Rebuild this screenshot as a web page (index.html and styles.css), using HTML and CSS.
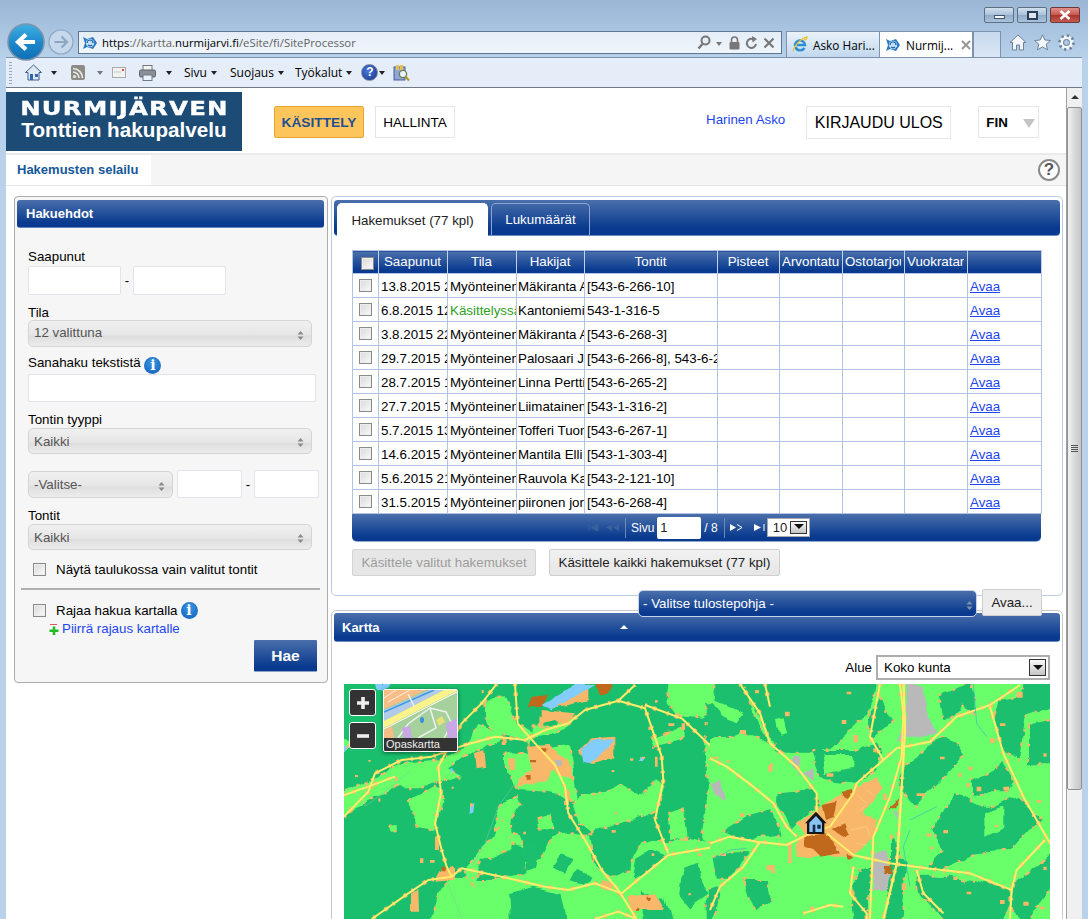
FILE: index.html
```html
<!DOCTYPE html>
<html lang="fi">
<head>
<meta charset="utf-8">
<title>Nurmijärven Tonttien hakupalvelu</title>
<link rel="stylesheet" href="styles.css">
</head>
<body>
<svg class="defs" width="0" height="0" aria-hidden="true">
  <defs>
    <linearGradient id="backG" x1="0" y1="0" x2="0" y2="1"><stop offset="0" stop-color="#3fb0e4"/><stop offset=".55" stop-color="#1b86c9"/><stop offset="1" stop-color="#0f6fb5"/></linearGradient>
    <symbol id="site" viewBox="0 0 16 16">
      <path d="M1 2 L5 4 L11 2 L15 8 L11 14 L5 12 L1 14 L3 8 Z" fill="#2a78c2"/>
      <circle cx="8" cy="8" r="4.2" fill="#bfe0f7"/>
      <path d="M5 8 a3 3 0 0 1 6 0 M6 10 a3 3 0 0 0 4 0" fill="none" stroke="#1e5fa8" stroke-width="1.2"/>
    </symbol>
    <filter id="rough" x="-5%" y="-5%" width="110%" height="110%">
      <feTurbulence type="fractalNoise" baseFrequency=".012" numOctaves="3" seed="4"/>
      <feDisplacementMap in="SourceGraphic" scale="34" xChannelSelector="R" yChannelSelector="G"/>
    </filter>
    <filter id="roughSmall" x="-5%" y="-5%" width="110%" height="110%">
      <feTurbulence type="fractalNoise" baseFrequency=".03" numOctaves="2" seed="9"/>
      <feDisplacementMap in="SourceGraphic" scale="12" xChannelSelector="R" yChannelSelector="G"/>
    </filter>
  </defs>
</svg>
<div class="win">
  <div class="titlebar">
    <span class="winbtn"><i class="min"></i></span>
    <span class="winbtn"><i class="rest"></i></span>
    <span class="winbtn close">
      <svg width="14" height="10" viewBox="0 0 14 10"><path d="M2.5 1 L11.5 9 M11.5 1 L2.5 9" stroke="#fff" stroke-width="2.6"/></svg>
    </span>
  </div>
  <div class="navrow">
    <span class="backbtn">
      <svg width="38" height="38" viewBox="0 0 38 38"><circle cx="19" cy="19" r="18" fill="url(#backG)" stroke="#7d93ab" stroke-width="1.6"/><path d="M28 19 H12 M19 11.5 L11 19 L19 26.5" fill="none" stroke="#fff" stroke-width="4.2"/></svg>
    </span>
    <span class="fwdbtn">
      <svg width="26" height="26" viewBox="0 0 26 26"><circle cx="13" cy="13" r="12" fill="#c5d8ec" stroke="#8fa6bf" stroke-width="1.2"/><path d="M6.5 13 H18 M13.5 7.5 L19 13 L13.5 18.5" fill="none" stroke="#8ea7c0" stroke-width="2.2"/></svg>
    </span>
    <div class="address">
      <svg class="siteicon" width="16" height="16"><use href="#site"/></svg>
      <span class="url">https<span class="dim">://kartta.</span>nurmijarvi.fi<span class="dim">/eSite/fi/SiteProcessor</span></span>
      <span class="addr-tools">
        <svg width="14" height="15" viewBox="0 0 14 15"><circle cx="8.5" cy="5.5" r="4" fill="none" stroke="#777" stroke-width="2"/><path d="M5.5 9 L1.5 13.5" stroke="#777" stroke-width="2.4"/></svg>
        <i class="caret grey"></i>
        <svg class="lock" width="11" height="14" viewBox="0 0 11 14"><path d="M2.5 6 V4 a3 3 0 0 1 6 0 V6" fill="none" stroke="#777" stroke-width="1.6"/><rect x="0.5" y="6" width="10" height="7.5" rx="1" fill="#777"/></svg>
        <svg width="13" height="14" viewBox="0 0 13 14"><path d="M11 8 A4.6 4.6 0 1 1 8.6 3.2" fill="none" stroke="#777" stroke-width="2"/><path d="M7 0 L12 3 L7.5 6.5 Z" fill="#777"/></svg>
        <svg width="12" height="12" viewBox="0 0 12 12"><path d="M1.5 1.5 L10.5 10.5 M10.5 1.5 L1.5 10.5" stroke="#777" stroke-width="2.2"/></svg>
      </span>
    </div>
    <div class="browser-tabs">
      <div class="btab inactive">
        <svg width="16" height="17" viewBox="0 0 16 17"><path d="M3 10 a5 5 0 1 1 10 -1 H5 M3.5 11 a5 5 0 0 0 9 1" fill="none" stroke="#2b8fd6" stroke-width="2.4"/><path d="M1 15 C3 9 9 2 15 1 C13 6 14 4 12 3" fill="none" stroke="#f0c020" stroke-width="1.2"/></svg>
        <span>Asko Hari...</span>
      </div>
      <div class="btab active">
        <svg width="16" height="16"><use href="#site"/></svg>
        <span>Nurmij...</span>
        <svg class="tabx" width="10" height="10" viewBox="0 0 10 10"><path d="M1 1 L9 9 M9 1 L1 9" stroke="#9a9a9a" stroke-width="2.2"/></svg>
      </div>
      <div class="btab newtab"></div>
    </div>
    <div class="ie-tools">
      <svg width="18" height="17" viewBox="0 0 18 17"><path d="M9 1 L17 8.5 H14.5 V16 H10.500 V11 H7.500 V16 H3.500 V8.500 H1 Z" fill="#f3f7fb" stroke="#6d8299"/></svg>
      <svg width="17" height="17" viewBox="0 0 17 17"><path d="M8.5 .8 L10.8 6 L16.4 6.5 L12.2 10.2 L13.5 15.8 L8.5 12.9 L3.5 15.8 L4.8 10.2 L.6 6.5 L6.2 6 Z" fill="#f3f7fb" stroke="#6d8299"/></svg>
      <svg width="17" height="17" viewBox="0 0 17 17"><circle cx="8.5" cy="8.5" r="5.2" fill="none" stroke="#f3f7fb" stroke-width="3.4"/><circle cx="8.5" cy="8.5" r="7" fill="none" stroke="#6d8299" stroke-width="2.6" stroke-dasharray="2.4 3.1"/><circle cx="8.5" cy="8.5" r="3" fill="none" stroke="#6d8299"/></svg>
    </div>
  </div>
  <div class="toolbar">
    <i class="grip"></i>
    <svg class="t-home" width="17" height="17" viewBox="0 0 17 17"><path d="M8.5 1 L16.5 8.5 H14 V16 H3 V8.5 H.5 Z" fill="#dfe9f5" stroke="#3c5f86"/><rect x="5" y="10" width="3" height="6" fill="#2f66b2"/><rect x="10" y="10" width="3" height="3" fill="#2f66b2"/></svg>
    <i class="caret t-c1"></i>
    <svg class="t-rss" width="14" height="15" viewBox="0 0 14 15"><rect width="14" height="15" rx="2" fill="#8c8c86"/><circle cx="3.5" cy="11.5" r="1.6" fill="#e8e8e4"/><path d="M2 7 a6 6 0 0 1 6 6 M2 3.5 a9.500 9.500 0 0 1 9.500 9.500" fill="none" stroke="#e8e8e4" stroke-width="1.7"/></svg>
    <i class="caret grey t-c2"></i>
    <svg class="t-mail" width="14" height="11" viewBox="0 0 14 11"><rect x=".5" y=".5" width="13" height="10" fill="#f2f2f2" stroke="#a9a9a9"/><path d="M2 5 H9" stroke="#c9c9c9"/><rect x="10" y="2" width="2" height="2" fill="#d44"/></svg>
    <svg class="t-print" width="17" height="16" viewBox="0 0 17 16"><rect x="4" y="0.500" width="9" height="5" fill="#f4f4f4" stroke="#777"/><rect x=".5" y="5" width="16" height="7" rx="1.500" fill="#8b9096" stroke="#5f656b"/><rect x="4" y="10" width="9" height="5.500" fill="#eaf2fb" stroke="#6b7a8a"/></svg>
    <i class="caret t-c3"></i>
    <span class="menu t-sivu">Sivu</span><i class="caret t-mc"></i>
    <span class="menu t-suo">Suojaus</span><i class="caret t-mc"></i>
    <span class="menu t-tyo">Työkalut</span><i class="caret t-mc"></i>
    <span class="t-help">?</span><i class="caret t-c4"></i>
    <svg class="t-res" width="17" height="18" viewBox="0 0 17 18"><rect x="1" y="3" width="11" height="13" fill="#8ea6d8" stroke="#4b5f96"/><rect x="3" y="1" width="3" height="5" fill="#e3c24c"/><rect x="7" y="1" width="3" height="5" fill="#e3c24c"/><circle cx="10" cy="10" r="3.600" fill="#eaf6ff" stroke="#6d7c4d" stroke-width="1.300"/><path d="M12.500 12.500 L16 16.500" stroke="#b7942a" stroke-width="2"/></svg>
  </div>

  <div class="viewport">
    <div class="page">
      <header class="header">
        <div class="logo">
          <div class="logo-1"><span>NURMIJÄRVEN</span></div>
          <div class="logo-2">Tonttien hakupalvelu</div>
        </div>
        <a class="navbtn current">KÄSITTELY</a>
        <a class="navbtn">HALLINTA</a>
        <a class="username">Harinen Asko</a>
        <a class="logout">KIRJAUDU ULOS</a>
        <span class="lang">FIN<i class="lang-caret"></i></span>
      </header>
      <nav class="subnav">
        <a class="subtab">Hakemusten selailu</a>
        <span class="help">?</span>
      </nav>
      <div class="content">
        <aside class="filters">
          <h2 class="bar">Hakuehdot</h2>
          <div class="filter-body">
            <label class="lbl first">Saapunut</label>
            <div class="range">
              <span class="inp w93"></span><span class="dash">-</span><span class="inp w93"></span>
            </div>
            <label class="lbl l-tila">Tila</label>
            <div class="sel h27">12 valittuna<svg class="updown" width="7" height="9" viewBox="0 0 7 9"><path d="M3.500 0 L6.500 3.500 H.5 Z M.5 5.500 H6.500 L3.500 9 Z" fill="#8a8a8a"/></svg></div>
            <label class="lbl l-sana">Sanahaku tekstistä <span class="info">i</span></label>
            <span class="inp full"></span>
            <label class="lbl l-tyyppi">Tontin tyyppi</label>
            <div class="sel h26">Kaikki<svg class="updown" width="7" height="9" viewBox="0 0 7 9"><path d="M3.500 0 L6.500 3.500 H.5 Z M.5 5.500 H6.500 L3.500 9 Z" fill="#8a8a8a"/></svg></div>
            <div class="range2">
              <div class="sel small">-Valitse-<svg class="updown" width="7" height="9" viewBox="0 0 7 9"><path d="M3.500 0 L6.500 3.500 H.5 Z M.5 5.500 H6.500 L3.500 9 Z" fill="#8a8a8a"/></svg></div>
              <span class="inp w65"></span><span class="dash">-</span><span class="inp w65"></span>
            </div>
            <label class="lbl l-tontit">Tontit</label>
            <div class="sel h26">Kaikki<svg class="updown" width="7" height="9" viewBox="0 0 7 9"><path d="M3.500 0 L6.500 3.500 H.5 Z M.5 5.500 H6.500 L3.500 9 Z" fill="#8a8a8a"/></svg></div>
            <label class="check c-1"><input type="checkbox" class="cb"> Näytä taulukossa vain valitut tontit</label>
            <hr class="rule">
            <label class="check c-2"><input type="checkbox" class="cb"> Rajaa hakua kartalla <span class="info">i</span></label>
            <div class="drawlink">
              <svg width="10" height="11" viewBox="0 0 10 11"><path d="M1 .5 H8" stroke="#e05555"/><path d="M5 2.500 V11 M.5 6.800 H9.500" stroke="#22bb22" stroke-width="2.600"/></svg>
              <a>Piirrä rajaus kartalle</a>
            </div>
            <div class="search-row"><button class="hae">Hae</button></div>
          </div>
        </aside>

        <main class="results">
          <section class="panel grid-panel">
            <div class="tabbar">
              <a class="tab on">Hakemukset (77 kpl)</a>
              <a class="tab">Lukumäärät</a>
            </div>
            <div class="table-wrap">
              <table class="grid">
                <colgroup>
                  <col class="c0"><col class="c1"><col class="c2"><col class="c3"><col class="c4"><col class="c5"><col class="c6"><col class="c7"><col class="c8"><col class="c9">
                </colgroup>
                <thead>
                  <tr><th><input type="checkbox" class="cb head"></th><th><span class="clip">Saapunut</span></th><th><span class="clip">Tila</span></th><th><span class="clip">Hakijat</span></th><th><span class="clip">Tontit</span></th><th><span class="clip">Pisteet</span></th><th><span class="clip">Arvontatulos</span></th><th><span class="clip">Ostotarjous</span></th><th><span class="clip">Vuokratarjous</span></th><th></th></tr>
                </thead>
                <tbody>
                  <tr><td><input type="checkbox" class="cb"></td><td>13.8.2015 21:15</td><td>Myönteinen</td><td>Mäkiranta Antti</td><td>[543-6-266-10]</td><td></td><td></td><td></td><td></td><td><a>Avaa</a></td></tr>
                  <tr><td><input type="checkbox" class="cb"></td><td>6.8.2015 12:40</td><td class="green">Käsittelyssä</td><td>Kantoniemi Esa</td><td>543-1-316-5</td><td></td><td></td><td></td><td></td><td><a>Avaa</a></td></tr>
                  <tr><td><input type="checkbox" class="cb"></td><td>3.8.2015 22:10</td><td>Myönteinen</td><td>Mäkiranta Antti</td><td>[543-6-268-3]</td><td></td><td></td><td></td><td></td><td><a>Avaa</a></td></tr>
                  <tr><td><input type="checkbox" class="cb"></td><td>29.7.2015 20:05</td><td>Myönteinen</td><td>Palosaari Jari</td><td>[543-6-266-8], 543-6-266-9</td><td></td><td></td><td></td><td></td><td><a>Avaa</a></td></tr>
                  <tr><td><input type="checkbox" class="cb"></td><td>28.7.2015 18:30</td><td>Myönteinen</td><td>Linna Pertti</td><td>[543-6-265-2]</td><td></td><td></td><td></td><td></td><td><a>Avaa</a></td></tr>
                  <tr><td><input type="checkbox" class="cb"></td><td>27.7.2015 19:20</td><td>Myönteinen</td><td>Liimatainen Ari</td><td>[543-1-316-2]</td><td></td><td></td><td></td><td></td><td><a>Avaa</a></td></tr>
                  <tr><td><input type="checkbox" class="cb"></td><td>5.7.2015 13:45</td><td>Myönteinen</td><td>Tofferi Tuomas</td><td>[543-6-267-1]</td><td></td><td></td><td></td><td></td><td><a>Avaa</a></td></tr>
                  <tr><td><input type="checkbox" class="cb"></td><td>14.6.2015 21:00</td><td>Myönteinen</td><td>Mantila Elli</td><td>[543-1-303-4]</td><td></td><td></td><td></td><td></td><td><a>Avaa</a></td></tr>
                  <tr><td><input type="checkbox" class="cb"></td><td>5.6.2015 21:30</td><td>Myönteinen</td><td>Rauvola Kari</td><td>[543-2-121-10]</td><td></td><td></td><td></td><td></td><td><a>Avaa</a></td></tr>
                  <tr><td><input type="checkbox" class="cb"></td><td>31.5.2015 20:10</td><td>Myönteinen</td><td>piironen jorma</td><td>[543-6-268-4]</td><td></td><td></td><td></td><td></td><td><a>Avaa</a></td></tr>
                </tbody>
              </table>
              <div class="pager">
                <svg class="pg-first" width="11" height="7" viewBox="0 0 11 7"><path d="M1 0 V7 M10 0 L3 3.500 L10 7 Z" stroke="#38619e" fill="#38619e"/></svg>
                <svg class="pg-prev" width="13" height="7" viewBox="0 0 13 7"><path d="M6 0 L0 3.500 L6 7 Z M13 0 L7 3.500 L13 7 Z" fill="#38619e"/></svg>
                <i class="pg-sep"></i>
                <span class="pg-text">Sivu</span>
                <span class="pg-input">1</span>
                <span class="pg-text">/ 8</span>
                <i class="pg-sep"></i>
                <svg class="pg-next" width="13" height="7" viewBox="0 0 13 7"><path d="M0 0 L6 3.500 L0 7 Z" fill="#fff"/><path d="M7 .5 L12 3.500 L7 6.500" fill="none" stroke="#fff"/></svg>
                <svg class="pg-last" width="11" height="7" viewBox="0 0 11 7"><path d="M0 0 L7 3.500 L0 7 Z" fill="#fff"/><path d="M10 0 V7" stroke="#fff"/></svg>
                <span class="pg-size">10<i class="dropbtn small-drop"></i></span>
              </div>
            </div>
            <div class="actions">
              <button class="btn disabled">Käsittele valitut hakemukset</button>
              <button class="btn all">Käsittele kaikki hakemukset (77 kpl)</button>
            </div>
          </section>

          <div class="print-tools">
            <div class="print-sel">- Valitse tulostepohja -<svg class="updown" width="7" height="9" viewBox="0 0 7 9"><path d="M3.500 0 L6.500 3.500 H.5 Z M.5 5.500 H6.500 L3.500 9 Z" fill="#7f8fa8"/></svg></div>
            <button class="btn open">Avaa...</button>
          </div>

          <section class="panel map-panel">
            <div class="mapbar"><span class="mapbar-title">Kartta</span><i class="collapse"></i></div>
            <div class="area-row">
              <span>Alue</span>
              <span class="area-sel">Koko kunta<i class="dropbtn"></i></span>
            </div>
            <div class="map">
              <svg class="mapsvg" width="706" height="235" viewBox="0 0 706 235">
                <defs>
                  <g id="roads9">
                    <path d="M27,410 L100,335 L120,280 L200,240 L290,230 L390,195 L480,170 L570,180 L630,150 L700,130 L750,90 L850,62 L900,15"/>
                    <path d="M540,12 L548,130 L600,190 L660,255 L690,320 L700,400 L750,480 L800,570 L850,630 L905,717"/>
                    <path d="M485,12 L440,70 L380,130 L310,260 L318,340 L300,430 L320,510 L335,560 L350,590 L280,600 L220,640 L110,717"/>
                    <path d="M350,590 L380,565 L520,595 L630,620 L700,630 L780,610 L860,640 L920,590 L1000,525 L1140,500"/>
                    <path d="M850,62 L930,85 L980,230 L985,300 L960,420 L1000,520"/>
                    <path d="M930,75 L1040,115 L1140,210"/>
                    <path d="M780,717 L850,695 L905,717"/>
                    <path d="M27,345 L100,320 L180,290"/>
                  </g>
                  <g id="roads10">
                    <path d="M90,12 L150,100 L180,190 L260,260 L320,340 L320,400"/>
                    <path d="M0,235 L50,260 L130,320 L190,370 L230,440 L260,470"/>
                    <path d="M0,490 L60,470 L140,485 L230,495 L300,460 L360,440 L430,340 L440,310 L520,240 L560,205 L660,185 L740,110 L840,75 L930,15"/>
                    <path d="M350,460 L430,525 L540,550 L650,565 L780,580 L905,630"/>
                    <path d="M510,12 L480,170 L520,240"/>
                    <path d="M840,80 L880,220 L940,350 L1020,490"/>
                    <path d="M1005,480 L920,570 L905,630 L900,717"/>
                    <path d="M150,485 L100,560 L30,620 L0,690"/>
                    <path d="M620,570 L640,640 L700,700"/>
                    <path d="M430,560 L420,640 L470,700 L470,717"/>
                    <path d="M280,700 L360,675 L400,680"/>
                    <path d="M165,12 L180,80"/>
                    <path d="M570,12 L580,100 L575,230 L540,350 L490,470 L480,717"/>
                    <path d="M580,12 L585,150 L570,400 L560,550 L520,717"/>
                  </g>
                </defs>
                <rect width="706" height="235" fill="#1abf6d"/>
                <g transform="translate(-9 -4) scale(.33333)">
                  <g filter="url(#rough)">
                    <g fill="#69ff6b" stroke="#f9b769" stroke-width="6" stroke-dasharray="8 34 12 26">
                      <path d="M280,730 L300,640 L350,600 L480,600 L525,590 L575,580 L570,540 L620,530 L650,470 L720,460 L762,470 L775,540 L830,590 L880,570 L900,520 L920,482 L1000,490 L1060,470 L1160,500 L1160,730 Z"/>
                      <path d="M27,335 L60,320 L110,300 L165,268 L240,248 L320,240 L380,205 L430,135 L505,155 L490,185 L420,210 L345,262 L390,285 L330,305 L250,325 L180,325 L115,345 L80,380 L10,410 L10,340 Z"/>
                      <path d="M228,360 L300,320 L322,330 L300,450 L240,440 Z"/>
                      <path d="M445,62 L510,58 L530,82 L545,130 L600,165 L585,190 L560,175 L490,160 L450,120 Z"/>
                      <path d="M590,140 L660,135 L720,105 L700,140 L640,165 L590,175 Z"/>
                      <path d="M1000,0 L1160,0 L1160,70 L1090,110 L1020,100 L990,60 Z"/>
                      <path d="M950,175 L1040,150 L1050,175 L990,190 L960,200 Z"/>
                      <path d="M510,230 L700,200 L725,355 L640,335 L550,330 L510,280 Z"/>
                      <path d="M500,370 L550,350 L562,380 L512,460 L552,480 L562,505 L500,492 L480,470 L472,440 Z"/>
                      <path d="M605,410 L640,400 L652,445 L610,452 Z"/>
                      <path d="M738,345 L780,340 L860,315 L910,345 L965,295 L985,320 L960,380 L935,405 L840,430 L770,460 L735,430 L715,360 Z"/>
                      <path d="M162,440 L185,438 L185,460 L165,462 Z"/>
                      <path d="M1110,190 L1160,190 L1160,500 L1100,480 L1120,350 Z"/>
                      <path d="M1000,400 L1040,385 L1060,470 L1010,480 Z"/>
                      <path d="M500,420 L530,430 L520,510 L440,540 L410,620 L395,580 Z"/>
                      <path d="M5,190 L40,195 L30,220 L5,225 Z"/>
                    </g>
                    <g fill="#1abf6d">
                      <path d="M520,640 L600,620 L680,640 L695,730 L525,730 Z"/>
                      <path d="M680,520 L720,535 L690,575 L650,560 Z"/>
                      <path d="M900,540 L950,510 L990,530 L940,580 L890,600 Z"/>
                      <path d="M1040,570 L1090,555 L1120,640 L1060,680 L1030,640 Z"/>
                      <path d="M730,570 L770,590 L740,610 L700,600 Z"/>
                      <path d="M920,640 L990,650 L1010,730 L920,730 Z"/>
                      <path d="M580,500 L610,490 L600,560 L570,570 Z"/>
                    </g>
                  </g>
                  <g filter="url(#roughSmall)">
                    <g fill="#f9b769">
                      <path d="M575,200 L640,195 L700,240 L715,295 L690,290 L650,270 L640,300 L600,310 L545,320 L555,290 L590,270 Z"/>
                      <path d="M620,90 L720,100 L690,140 L660,120 L620,130 Z"/>
                      <path d="M725,215 L770,175 L838,170 L838,235 L770,252 Z"/>
                      <path d="M228,640 L250,630 L252,695 L228,695 Z"/>
                      <path d="M320,570 L360,560 L360,600 L300,605 Z"/>
                      <path d="M420,220 L445,210 L450,260 L425,265 Z"/>
                      <path d="M880,650 L960,640 L990,690 L890,690 Z"/>
                      <path d="M800,600 L840,610 L830,630 L790,620 Z"/>
                      <path d="M720,35 L760,20 L760,60 L700,75 L640,85 L700,60 Z"/>
                      <path d="M520,235 h20 v35 h-20 z M690,330 h12 v45 h-12 z M610,110 h12 v35 h-12 z M500,170 h15 v25 h-15 z"/>
                    </g>
                    <g fill="#c0671a">
                      <path d="M590,50 L640,45 L620,80 L578,82 Z"/>
                      <path d="M782,12 L832,12 L822,44 L795,46 Z"/>
                      <path d="M620,205 h14 v12 h-14 z M585,240 h18 v10 h-18 z M575,285 h12 v14 h-12 z M320,560 h12 v14 h-12 z M935,650 h12 v10 h-12 z M900,685 h10 v8 h-10 z"/>
                    </g>
                    <g fill="#82cdfb">
                      <path d="M620,75 L680,40 L720,12 L780,12 L720,50 L650,88 Z"/>
                      <path d="M738,208 L770,180 L836,178 L820,205 L765,250 L745,245 Z"/>
                      <path d="M120,12 L165,12 L150,30 L125,30 Z"/>
                      <path d="M405,375 L418,365 L415,400 L404,405 Z"/>
                      <path d="M27,195 L37,200 L30,215 L27,215 Z"/>
                      <path d="M350,265 h6 v12 h-6 z M915,235 h12 v8 h-12 z"/>
                    </g>
                  </g>
                  <path fill="#f9b769" d="M100,240 h7 v5 h-7 z M180,290 h8 v12 h-8 z M60,285 h9 v6 h-9 z M105,320 h10 v6 h-10 z M130,355 h6 v10 h-6 z M885,235 h10 v7 h-10 z M300,470 h12 v40 h-12 z M255,535 h10 v14 h-10 z M285,540 h14 v8 h-14 z M440,30 h6 v10 h-6 z M940,140 h12 v10 h-12 z M960,230 h8 v30 h-8 z M1000,130 h18 v8 h-18 z M1040,130 h10 v20 h-10 z M405,370 h8 v10 h-8 z M350,320 h6 v6 h-6 z M830,270 h8 v6 h-8 z M770,340 h12 v6 h-12 z M840,395 h6 v8 h-6 z M565,455 h8 v8 h-8 z M505,510 h7 v7 h-7 z M430,580 h10 v6 h-10 z M410,590 h6 v8 h-6 z M1090,520 h10 v8 h-10 z M1060,640 h8 v6 h-8 z M950,520 h8 v8 h-8 z M760,460 h12 v6 h-12 z M830,450 h12 v8 h-12 z M920,230 h10 v6 h-10 z M960,60 h8 v8 h-8 z M1020,100 h12 v8 h-12 z"/>
                  <path d="M1125,320 L1140,300 L1140,345 Z" fill="#b9b9b9"/>
                  <path d="M660,240 L680,240 L680,258 L660,258 Z" fill="#b9b9b9"/>
                  <use href="#roads9" fill="none" stroke="#f9b769" stroke-width="13" stroke-dasharray="6 20 10 34"/>
                  <use href="#roads9" fill="none" stroke="#ffec6a" stroke-width="6" stroke-linejoin="round"/>
                  <g fill="none" stroke="#7bc9a8" stroke-width="1.500">
                    <path d="M540,310 L490,380 L450,490 L410,560"/>
                    <path d="M340,610 L380,717"/>
                    <path d="M90,380 L130,350 L230,270"/>
                  </g>
                </g>

                <g transform="translate(366 -4) scale(.33333)">
                  <rect x="0" y="12" width="1020" height="705" fill="#69ff6b"/>
                  <g filter="url(#rough)">
                    <g fill="#1abf6d" stroke="#f9b769" stroke-width="6" stroke-dasharray="7 38 11 30">
                      <path d="M160,0 L500,0 L490,60 L470,100 L430,140 L380,180 L360,200 L310,215 L270,215 L210,215 L190,200 L170,150 L140,90 L100,30 L85,0 Z"/>
                      <path d="M25,0 L85,0 L140,110 L175,190 L130,160 L90,160 L50,180 L-10,180 L-10,70 L15,70 Z"/>
                      <path d="M40,450 L120,400 L190,385 L215,470 L120,480 Z"/>
                      <path d="M210,340 L310,330 L320,380 L260,430 L240,450 L205,370 Z"/>
                      <path d="M590,250 L630,220 L700,170 L740,190 L760,220 L720,270 L660,330 L610,380 L590,350 L570,320 Z"/>
                      <path d="M700,510 L650,560 L690,570 L800,520 L900,510 L960,440 L1000,420 L920,350 L860,380 L790,380 L760,350 L730,340 L690,420 L660,450 Z"/>
                      <path d="M780,300 L820,280 L880,250 L920,310 L900,340 L820,340 L780,350 Z"/>
                      <path d="M680,40 L790,0 L800,50 L800,100 L760,80 L700,120 L690,90 Z"/>
                      <path d="M850,100 L880,220 L930,240 L950,110 L1040,80 L1040,0 L945,0 L920,50 L860,60 Z"/>
                      <path d="M100,600 L180,600 L190,660 L130,700 L110,640 Z"/>
                      <path d="M10,530 L60,520 L120,520 L60,590 L20,590 Z"/>
                      <path d="M440,570 L480,560 L480,730 L440,730 L420,620 Z"/>
                      <path d="M540,480 L590,540 L570,730 L520,730 L540,580 Z"/>
                      <path d="M620,590 L720,590 L790,600 L900,640 L880,730 L700,730 L660,680 L620,620 Z"/>
                      <path d="M300,210 L430,210 L500,190 L520,230 L490,270 L440,310 L330,290 L310,240 Z"/>
                      <path d="M960,580 L1040,500 L1040,600 L950,730 L900,680 L910,610 Z"/>
                      <path d="M-10,620 L30,610 L20,700 L-10,730 Z"/>
                      <path d="M550,120 L480,180 L480,100 L510,60 Z"/>
                      <path d="M960,140 L1040,120 L1040,250 L960,250 Z"/>
                    </g>
                    <g fill="#69ff6b">
                      <path d="M10,60 L60,80 L100,100 L80,130 L30,110 Z"/>
                      <path d="M195,120 L215,115 L225,165 L205,170 Z"/>
                      <path d="M340,225 L420,225 L430,260 L350,280 Z"/>
                      <path d="M820,400 L880,380 L880,440 L820,470 Z"/>
                    </g>
                  </g>
                  <g filter="url(#roughSmall)">
                    <g fill="#b9b9b9">
                      <path d="M590,0 L640,20 L650,100 L680,160 L640,170 L590,170 L555,190 L590,130 Z"/>
                      <path d="M490,520 L530,510 L540,580 L530,630 L490,630 Z"/>
                      <path d="M0,310 L30,300 L45,360 L15,345 Z"/>
                      <path d="M250,230 L275,230 L265,290 L310,265 L312,300 L280,285 L250,260 Z"/>
                      <path d="M550,390 L565,400 L560,415 Z"/>
                    </g>
                    <path fill="#f9b769" d="M345,370 L420,335 L450,320 L500,290 L515,325 L490,365 L455,400 L500,420 L490,470 L460,500 L420,530 L370,530 L340,520 L300,535 L260,530 L260,490 L280,460 L260,430 L310,400 Z"/>
                    <g fill="#c0671a">
                      <path d="M280,470 L350,460 L390,520 L330,530 L310,510 L280,500 Z"/>
                      <path d="M335,375 L380,365 L370,410 L345,420 Z"/>
                      <path d="M395,335 L425,330 L420,360 L400,350 Z"/>
                      <path d="M368,450 L405,430 L420,465 L400,470 Z"/>
                      <path d="M535,385 L568,355 L562,385 Z"/>
                      <path d="M522,558 L542,558 L545,582 L520,582 Z"/>
                      <path d="M410,525 L430,528 L425,540 L412,538 Z"/>
                    </g>
                  </g>
                  <g fill="none" stroke="#fcd38e" stroke-width="2">
                    <path d="M440,345 L470,370 L450,395 M470,330 L490,345 M420,450 L470,440 L480,470 M440,490 L470,495"/>
                  </g>
                  <path fill="#f9b769" d="M180,250 h8 v22 h-8 z M90,150 h18 v12 h-18 z M225,95 h14 v14 h-14 z M395,120 h14 v12 h-14 z M430,165 h14 v22 h-14 z M490,205 h10 v12 h-10 z M920,35 h18 v18 h-18 z M740,100 h22 v10 h-22 z M870,130 h16 v8 h-16 z M800,320 h14 v14 h-14 z M770,310 h10 v12 h-10 z M880,320 h18 v10 h-18 z M620,340 h26 v8 h-26 z M650,460 h14 v10 h-14 z M700,450 h14 v10 h-14 z M855,435 h10 v6 h-10 z M745,280 h10 v10 h-10 z M690,230 h14 v8 h-14 z M1000,220 h10 v10 h-10 z M980,360 h14 v8 h-14 z M30,520 h18 v8 h-18 z M90,400 h12 v10 h-12 z M175,255 h10 v20 h-10 z M350,280 h20 v10 h-20 z M10,230 h16 v6 h-16 z M170,555 h24 v16 h-24 z M185,570 h10 v10 h-10 z M420,635 h14 v12 h-14 z M300,680 h12 v12 h-12 z M575,610 h14 v20 h-14 z M730,590 h12 v10 h-12 z M770,635 h14 v8 h-14 z M870,660 h14 v12 h-14 z M940,665 h16 v12 h-16 z M990,680 h14 v8 h-14 z M660,500 h10 v8 h-10 z M520,340 h10 v20 h-10 z M235,490 h10 v60 h-10 z M50,240 h8 v8 h-8 z M410,35 h14 v8 h-14 z M135,30 h12 v10 h-12 z M775,260 h12 v10 h-12 z M840,175 h14 v14 h-14 z M1000,560 h10 v10 h-10 z"/>
                  <use href="#roads10" fill="none" stroke="#f9b769" stroke-width="13" stroke-dasharray="6 20 10 34"/>
                  <use href="#roads10" fill="none" stroke="#ffec6a" stroke-width="6" stroke-linejoin="round"/>
                  <path d="M582,12 L586,150 L572,400 L562,550 L522,717" fill="none" stroke="#ffec6a" stroke-width="4"/>
                  <g fill="none" stroke="#38b8c0" stroke-width="2">
                    <path d="M600,450 L580,500 L590,560 L600,620"/>
                    <path d="M680,380 L640,400 L600,420"/>
                    <path d="M10,540 L60,510 L110,505"/>
                    <path d="M790,12 L800,130 L830,170"/>
                  </g>
                  <g>
                    <path d="M318,395 L350,430 L343,430 L343,462 L291,462 L291,430 L285,430 Z" fill="#161616"/>
                    <path d="M318,408 L336,428 V456 H298 V428 Z" fill="#8ac4f2"/>
                    <path d="M308,434 H316 V456 H308 Z M322,434 H332 V446 H322 Z" fill="#132a4a"/>
                  </g>
                </g>
              </svg>
              <button class="zoom plus">
                <svg width="14" height="14" viewBox="0 0 14 14"><path d="M7 1 V13 M1 7 H13" stroke="#eee" stroke-width="3.600"/></svg>
              </button>
              <button class="zoom minus">
                <svg width="14" height="14" viewBox="0 0 14 14"><path d="M1 7 H13" stroke="#eee" stroke-width="3.600"/></svg>
              </button>
              <div class="basemap">
                <svg class="basemap-img" width="73" height="48" viewBox="0 0 73 48">
                  <rect width="73" height="48" fill="#a6d09c"/>
                  <path d="M0 0 H42 L0 19 Z" fill="#f8bd87"/>
                  <path d="M12 0 L0 8 M26 0 L4 12" stroke="#fff" stroke-width=".8"/>
                  <path d="M0 20 L46 0 H60 L0 31 Z" fill="#b2cbe8"/>
                  <path d="M0 22 L50 0" stroke="#3b97e8" stroke-width="1.500"/>
                  <path d="M0 31 L60 0 H73 V1 L0 38 Z" fill="#faf28a"/>
                  <path d="M0 39 L73 2" stroke="#fff" stroke-width="1"/>
                  <path d="M24 4 L30 16 M14 48 L24 34 L46 18 L62 22 L68 34 L60 48 M46 18 L52 38 L34 48" fill="none" stroke="#eef3ee" stroke-width="1.500"/>
                  <path d="M52 30 L58 26 L61 32 L55 36 Z" fill="#e7e27a"/>
                  <ellipse cx="38" cy="30" rx="2" ry="3" fill="#3b8fe0"/>
                  <path d="M62 34 L73 28 V48 H64 Z M18 38 L26 36 L28 48 H20 Z" fill="#c9a6e6"/>
                  <path d="M0 40 L8 36 L10 48 H0 Z" fill="#f8bd87"/>
                </svg>
                <span class="basemap-label">Opaskartta</span>
              </div>
            </div>
          </section>
        </main>
      </div>
    </div>
    <div class="scrollbar">
      <i class="arrow-up"></i>
      <div class="thumb"><i class="grip-v"></i></div>
    </div>
  </div>
</div>
</body>
</html>
```
FILE: styles.css
```css
* { box-sizing: border-box; }
html, body { margin: 0; padding: 0; }
body { font-family: "Liberation Sans", Arial, sans-serif; font-size: 13.33px; color: #000; overflow: hidden; }
.defs { position: absolute; }
i { display: block; font-style: normal; }
a { cursor: pointer; }

.win { width: 1088px; height: 919px; overflow: hidden; background: linear-gradient(#9ab6d4 0, #b9d2ec 60px, #b9d2ec 100%); }

/* window controls */
.titlebar { height: 31px; display: flex; justify-content: flex-end; padding: 7px 8px 0 0; gap: 3px; }
.winbtn { width: 30px; height: 16px; display: flex; align-items: center; justify-content: center; border: 1px solid #5f6f82; border-radius: 2px; background: linear-gradient(#d3e0ee 0, #a9c0da 50%, #90acc9 51%, #a9c3de 100%); }
.winbtn.close { background: linear-gradient(#e0908a 0, #c9564d 50%, #a8362e 51%, #c45a50 100%); border-color: #6a3a3a; }
.min { width: 11px; height: 4px; margin-top: 4px; background: #f3f6fa; border: 1px solid #44566b; }
.rest { width: 11px; height: 9px; background: #dbe6f1; border: 2px solid #2d3f55; }

/* nav row */
.navrow { height: 26px; display: flex; align-items: flex-start; position: relative; padding-left: 78px; }
.backbtn { position: absolute; left: 7px; top: -8px; width: 38px; height: 38px; }
.fwdbtn { position: absolute; left: 48px; top: -2px; width: 26px; height: 26px; }
.address { width: 704px; height: 23px; display: flex; align-items: center; background: linear-gradient(#e4edf7, #f0f5fb); border: 1px solid #5e7690; padding: 0 6px 0 3px; }
.siteicon { flex: none; }
.url { margin-left: 4px; font: 11.35px "Open Sans", sans-serif; color: #000; }
.dim { color: #636363; }
.addr-tools { margin-left: auto; display: flex; align-items: center; }
.addr-tools .caret { margin: 2px 7px 0 5px; }
.addr-tools .lock { margin-right: 5px; }
.addr-tools svg:nth-of-type(3) { margin-right: 5px; }
.browser-tabs { display: flex; margin-left: 4px; height: 26px; }
.btab { height: 26px; border: 1px solid #7d93ab; border-bottom: 0; display: flex; align-items: center; padding-left: 5px; font: 11.8px "Open Sans", sans-serif; gap: 5px; margin-right: -1px; }
.btab.inactive { width: 94px; background: linear-gradient(#eaf2fa, #c2d8ee); }
.btab.active { width: 94px; background: #fff; padding-left: 5px; }
.btab.newtab { width: 28px; margin-left: 1px; background: linear-gradient(#c6d9ee, #dbe7f5); }
.tabx { margin-left: 3px; }
.ie-tools { display: flex; gap: 7px; margin-left: 9px; margin-top: 3px; }

/* toolbar */
.toolbar { height: 31px; margin: 0 6px; display: flex; align-items: center; background: #e5edf8; border-top: 1px solid #7d93ab; border-bottom: 1px solid #6e7a86; font: 12px "Open Sans", sans-serif; color: #000; }
.grip { width: 3px; height: 22px; margin-left: 3px; background: repeating-linear-gradient(#9aa8b8 0 1px, transparent 1px 3px); }
.caret { width: 0; height: 0; border-left: 3.5px solid transparent; border-right: 3.5px solid transparent; border-top: 4px solid #222; flex: none; }
.caret.grey { border-top-color: #777; }
.t-home { margin-left: 13px; }
.t-c1 { margin-left: 9px; }
.t-rss { margin-left: 14px; }
.t-c2 { margin-left: 12px; }
.t-mail { margin-left: 9px; }
.t-print { margin-left: 13px; }
.t-c3 { margin-left: 10px; }
.menu { margin-right: 4px; }
.t-sivu { margin-left: 12px; }
.t-suo { margin-left: 13px; }
.t-tyo { margin-left: 11px; }
.t-help { margin-left: 9px; width: 17px; height: 17px; border-radius: 50%; background: radial-gradient(circle at 40% 40%, #4a78e0, #12327f); border: 1px solid #7d8aa0; color: #fff; font: bold 12px/15px "Liberation Sans", sans-serif; text-align: center; }
.t-c4 { margin-left: 1px; }
.t-res { margin-left: 8px; }

/* page */
.viewport { margin: 0 6px; height: 831px; display: flex; background: #fff; overflow: hidden; }
.page { width: 1060px; height: 831px; overflow: hidden; flex: none; }
.scrollbar { width: 16px; flex: none; background: #f0f0f0; border-left: 1px solid #a0a0a0; display: flex; flex-direction: column; align-items: center; }
.arrow-up { width: 0; height: 0; margin-top: 7px; border-left: 4px solid transparent; border-right: 4px solid transparent; border-bottom: 4px solid #333; }
.thumb { width: 15px; height: 683px; margin-top: 8px; display: flex; align-items: center; justify-content: center; border: 1px solid #8f8f8f; border-radius: 2px; background: linear-gradient(90deg, #f2f2f2, #d9d9d9 50%, #c6c6c6); }
.grip-v { width: 7px; height: 7px; background: repeating-linear-gradient(#555 0 1px, transparent 1px 2px); }

.header { height: 67px; padding: 4px 0 0 0; display: flex; align-items: flex-start; border-bottom: 2px solid #e8eaeb; }
.logo { width: 236px; height: 59px; background: #1c4b75; color: #fff; flex: none; text-align: center; overflow: hidden; }
.logo-1 { font: bold 20px/20px "DejaVu Sans", sans-serif; letter-spacing: 1px; margin-top: 6px; }
.logo-1 span { display: inline-block; transform: scaleX(1.22); -webkit-text-stroke: .4px #fff; }
.logo-2 { font: bold 20.7px/24px "Liberation Sans", sans-serif; margin-top: 0; }
.navbtn { height: 32px; margin-top: 14px; display: flex; align-items: center; justify-content: center; border: 1px solid #e6e6e6; font-size: 13.5px; width: 80px; margin-left: 11px; }
.navbtn.current { width: 90px; margin-left: 32px; background: #fec55c; border: 1px solid #eaa52f; color: #1d4f93; font-weight: bold; border-radius: 2px; font-size: 13.7px; }
.username { margin-left: 251px; margin-top: 19px; color: #1e46f0; font-size: 13.33px; line-height: 18px; }
.logout { margin-left: 21px; margin-top: 14px; width: 145px; height: 33px; border: 1px solid #e6e6e6; display: flex; align-items: center; justify-content: center; font-size: 16px; }
.lang { margin-left: 27px; margin-top: 14px; width: 61px; height: 32px; border: 1px solid #e6e6e6; display: flex; align-items: center; padding-left: 7px; font-weight: bold; font-size: 13.33px; }
.lang-caret { width: 0; height: 0; margin-left: 15px; margin-top: 2px; border-left: 6px solid transparent; border-right: 6px solid transparent; border-top: 9px solid #c4c4c4; }

.subnav { height: 31px; display: flex; background: #f5f5f5; border-bottom: 1px solid #e5e5e5; align-items: stretch; }
.subtab { width: 145px; background: #fff; color: #15589a; font-weight: bold; font-size: 13px; padding: 0 0 0 11px; line-height: 30px; }
.help { width: 22px; height: 22px; margin: 4px 6px 0 auto; border: 2px solid #8a8a8a; border-radius: 50%; text-align: center; font: bold 17px/18px "Liberation Sans", sans-serif; color: #555; background: #fff; }

.content { display: flex; align-items: flex-start; padding: 10px 0 0 8px; }

/* filter panel */
.filters { width: 314px; height: 487px; flex: none; background: #f6f6f6; border: 1px solid #adadad; border-radius: 4px; padding: 3px 3px 0 2px; }
.bar { margin: 0; height: 28px; font-size: 13px; font-weight: bold; color: #fff; line-height: 27px; padding-left: 9px; border-radius: 3px; border-bottom: 1px solid #5f86bd; background: linear-gradient(#4a6fab, #093a8f 85%); }
.filter-body { padding: 0 0 0 11px; }
.lbl { display: block; height: 16px; line-height: 18px; }
.lbl.first { margin-top: 20px; margin-bottom: 2px; }
.l-tila { margin-top: 9px; }
.lbl.l-sana { margin-top: 8px; margin-bottom: 3px; line-height: 16px; }
.l-sana .info { margin-left: 0; }
.l-tyyppi { margin-top: 9px; margin-bottom: 1px; }
.l-tontit { margin-top: 9px; margin-bottom: 1px; }
.range { display: flex; align-items: center; height: 29px; }
.inp { display: block; background: #fff; border: 1px solid #e3e3ea; border-radius: 2px; height: 29px; }
.w93 { width: 93px; }
.w65 { width: 65px; height: 28px; }
.full { width: 288px; height: 28px; }
.dash { width: 12px; text-align: center; }
.sel { position: relative; width: 284px; display: flex; align-items: center; padding-left: 5px; color: #555; background: linear-gradient(#f0f0f0 0, #e6e6e6 55%, #dedede 60%, #ececec 100%); border: 1px solid #d4d4d4; border-radius: 5px; }
.h27 { height: 27px; padding-bottom: 3px; }
.h26 { height: 26px; }
.updown { position: absolute; right: 7px; top: 50%; margin-top: -3px; }
.range2 { display: flex; align-items: center; margin-top: 16px; height: 28px; }
.sel.small { width: 145px; height: 27px; margin-top: 1px; margin-right: 4px; }
.check { display: flex; align-items: center; height: 16px; padding-left: 5px; }
.cb { appearance: none; -webkit-appearance: none; display: block; width: 13px; height: 13px; margin: 0 10px 0 0; flex: none; border: 1px solid #8a8a8a; background: linear-gradient(135deg, #d8d8d8, #fbfbfb); box-shadow: inset 0 0 0 1px #eee; }
.c-1 { margin-top: 11px; }
.rule { height: 2px; margin: 11px 0 0 -7px; width: 299px; border: 0; background: #b0b0b0; }
.c-2 { margin-top: 12px; }
.c-2 .info { margin-left: 3px; }
.info { display: inline-block; width: 17px; height: 17px; border-radius: 50%; background: radial-gradient(circle at 50% 35%, #3c96e4, #0f5cb6); color: #fff; text-align: center; font: bold 14px/17px "DejaVu Serif", serif; vertical-align: -3px; }
.drawlink { display: flex; align-items: flex-end; height: 17px; padding-left: 21px; margin-top: 2px; }
.drawlink a { color: #1e46f0; margin-left: 3px; line-height: 17px; }
.drawlink svg { margin-bottom: 2px; }
.search-row { display: flex; justify-content: flex-end; margin-top: 3px; padding-right: 7px; }
.hae { width: 63px; height: 32px; border: 0; border-bottom: 1px solid #8ba3c7; border-radius: 1px; color: #fff; font: bold 15.5px "Liberation Sans", sans-serif; background: linear-gradient(#4a6fab, #093a8f 85%); }

/* right column */
.results { position: relative; width: 732px; margin-left: 3px; flex: none; }
.panel { border: 1px solid #b8cce4; border-radius: 5px; background: #fff; padding: 3px 2px 0; }
.grid-panel { height: 400px; }
.tabbar { height: 36px; display: flex; align-items: flex-end; gap: 3px; padding: 0 0 0 3px; border-radius: 4px; background: linear-gradient(#4a6fab, #093a8f 80%); border-bottom: 1px solid #6b8ec2; }
.tab { height: 32px; width: 99px; display: flex; align-items: center; justify-content: center; color: #fff; border: 1px solid #8aa6d0; border-bottom: 0; border-radius: 5px 5px 0 0; font-size: 13.33px; }
.tab.on { width: 151px; height: 33px; margin-bottom: -1px; background: #fff; color: #222; border-color: #fff; }
.table-wrap { width: 689px; margin: 14px 0 0 18px; border-radius: 5px; }
.grid { width: 689px; table-layout: fixed; border-collapse: collapse; border: 1px solid #b2c4e4; }
.c0 { width: 26px; } .c1 { width: 69px; } .c2 { width: 69px; } .c3 { width: 68px; } .c4 { width: 133px; }
.c5 { width: 62px; } .c6 { width: 63px; } .c7 { width: 62px; } .c8 { width: 63px; } .c9 { width: 74px; }
.grid th { height: 23px; padding: 0 2px 2px; color: #fff; font-weight: normal; white-space: nowrap; overflow: hidden; background: linear-gradient(#4a6fab, #093a8f 85%); border-right: 1px solid #c2d0e8; text-align: center; font-size: 13.33px; }
.clip { display: block; overflow: hidden; margin-right: 1px; }
.grid td { height: 24px; padding: 1px 2px 0; white-space: nowrap; overflow: hidden; border: 1px solid #b2c4e4; font-size: 13.33px; }
.grid td:first-child, .grid th:first-child { padding: 0 0 0 6px; }
.grid td:nth-child(4) { padding-left: 1px; }
.grid .cb { margin: 0; }
.grid .cb.head { margin: 3px 0 0 2px; width: 13px; height: 13px; }
.grid a { color: #1e46f0; text-decoration: underline; }
.green { color: #2da01b; }
.pager { height: 28px; display: flex; align-items: center; padding-left: 236px; color: #fff; font-size: 12px; border-radius: 0 0 5px 5px; border-bottom: 1px solid #8ea8cf; background: linear-gradient(#4a6fab, #093a8f 85%); }
.pg-prev { margin-left: 7px; }
.pg-sep { width: 1px; height: 20px; background: #6c8ab8; margin: 0 5px 0 6px; }
.pg-input { width: 44px; height: 22px; margin: 0 3px 0 3px; background: #fff; color: #222; border-radius: 2px; padding-left: 3px; line-height: 22px; font-size: 13px; }
.pg-last { margin-left: 11px; }
.pg-size { width: 43px; height: 19px; margin-left: 2px; background: #fff; border: 1px solid #aaa; color: #222; display: flex; align-items: center; padding-left: 5px; position: relative; font-size: 13px; }
.dropbtn { position: absolute; right: 2px; top: 2px; width: 18px; height: 18px; border: 1px solid #333; background: linear-gradient(#fafafa, #c4c4c4); }
.dropbtn::after { content: ""; position: absolute; left: 3px; top: 5px; border-left: 5px solid transparent; border-right: 5px solid transparent; border-top: 5px solid #111; }
.small-drop { width: 17px; height: 13px; top: 2px; }
.small-drop::after { left: 3px; top: 2px; }
.actions { display: flex; gap: 13px; margin: 7px 0 0 18px; }
.btn { height: 27px; padding: 0; font: 13.33px "Liberation Sans", sans-serif; color: #222; background: linear-gradient(#f1f1f1, #e6e6e6); border: 1px solid #cfcfcf; border-radius: 2px; }
.btn.disabled { width: 184px; color: #9d9d9d; background: #e6e6e6; border-color: #d4d4d4; }
.btn.all { width: 231px; }

.print-tools { position: absolute; left: 307px; top: 393px; display: flex; align-items: flex-start; gap: 5px; z-index: 3; }
.print-sel { position: relative; width: 339px; height: 27px; margin-top: 1px; padding-left: 4px; color: #fff; line-height: 25px; border: 1px solid #c3d2e8; border-radius: 5px; background: linear-gradient(#4a6fab, #093a8f 85%); font-size: 13.33px; }
.print-sel .updown { right: 3px; }
.btn.open { width: 60px; height: 27px; background: #ececec; }

.map-panel { margin-top: 14px; height: 460px; padding-top: 2px; border-color: #c9c9c9; }
.mapbar { height: 29px; position: relative; display: flex; align-items: center; padding-left: 8px; border-radius: 3px; color: #fff; font-weight: bold; font-size: 13px; background: linear-gradient(#4a6fab, #093a8f 85%); border-bottom: 1px solid #6b8ec2; }
.collapse { position: absolute; left: 286px; top: 12px; border-left: 4px solid transparent; border-right: 4px solid transparent; border-bottom: 4px solid #fff; }
.area-row { display: flex; justify-content: flex-end; align-items: center; gap: 4px; height: 25px; margin: 13px 10px 0 0; }
.area-sel { position: relative; width: 174px; height: 25px; border: 2px solid #aeaeae; padding-left: 6px; line-height: 21px; background: #fff; }
.area-sel .dropbtn { top: 2px; right: 2px; width: 17px; height: 17px; }
.map { position: relative; width: 706px; height: 235px; margin: 4px 0 0 10px; overflow: hidden; background: #1abf6d; }
.mapsvg { display: block; }
.zoom { position: absolute; left: 5px; width: 27px; height: 27px; display: flex; align-items: center; justify-content: center; padding: 0; background: #333; border: 1px solid #fff; border-radius: 3px; }
.plus { top: 5px; }
.minus { top: 38px; }
.basemap { position: absolute; left: 39px; top: 5px; width: 75px; height: 63px; background: #333; border: 1px solid #fff; border-radius: 2px; box-shadow: 0 1px 4px rgba(0,0,0,.5); }
.basemap-img { display: block; }
.basemap-label { display: block; color: #eee; font-size: 11px; line-height: 13px; padding-left: 2px; }
```
